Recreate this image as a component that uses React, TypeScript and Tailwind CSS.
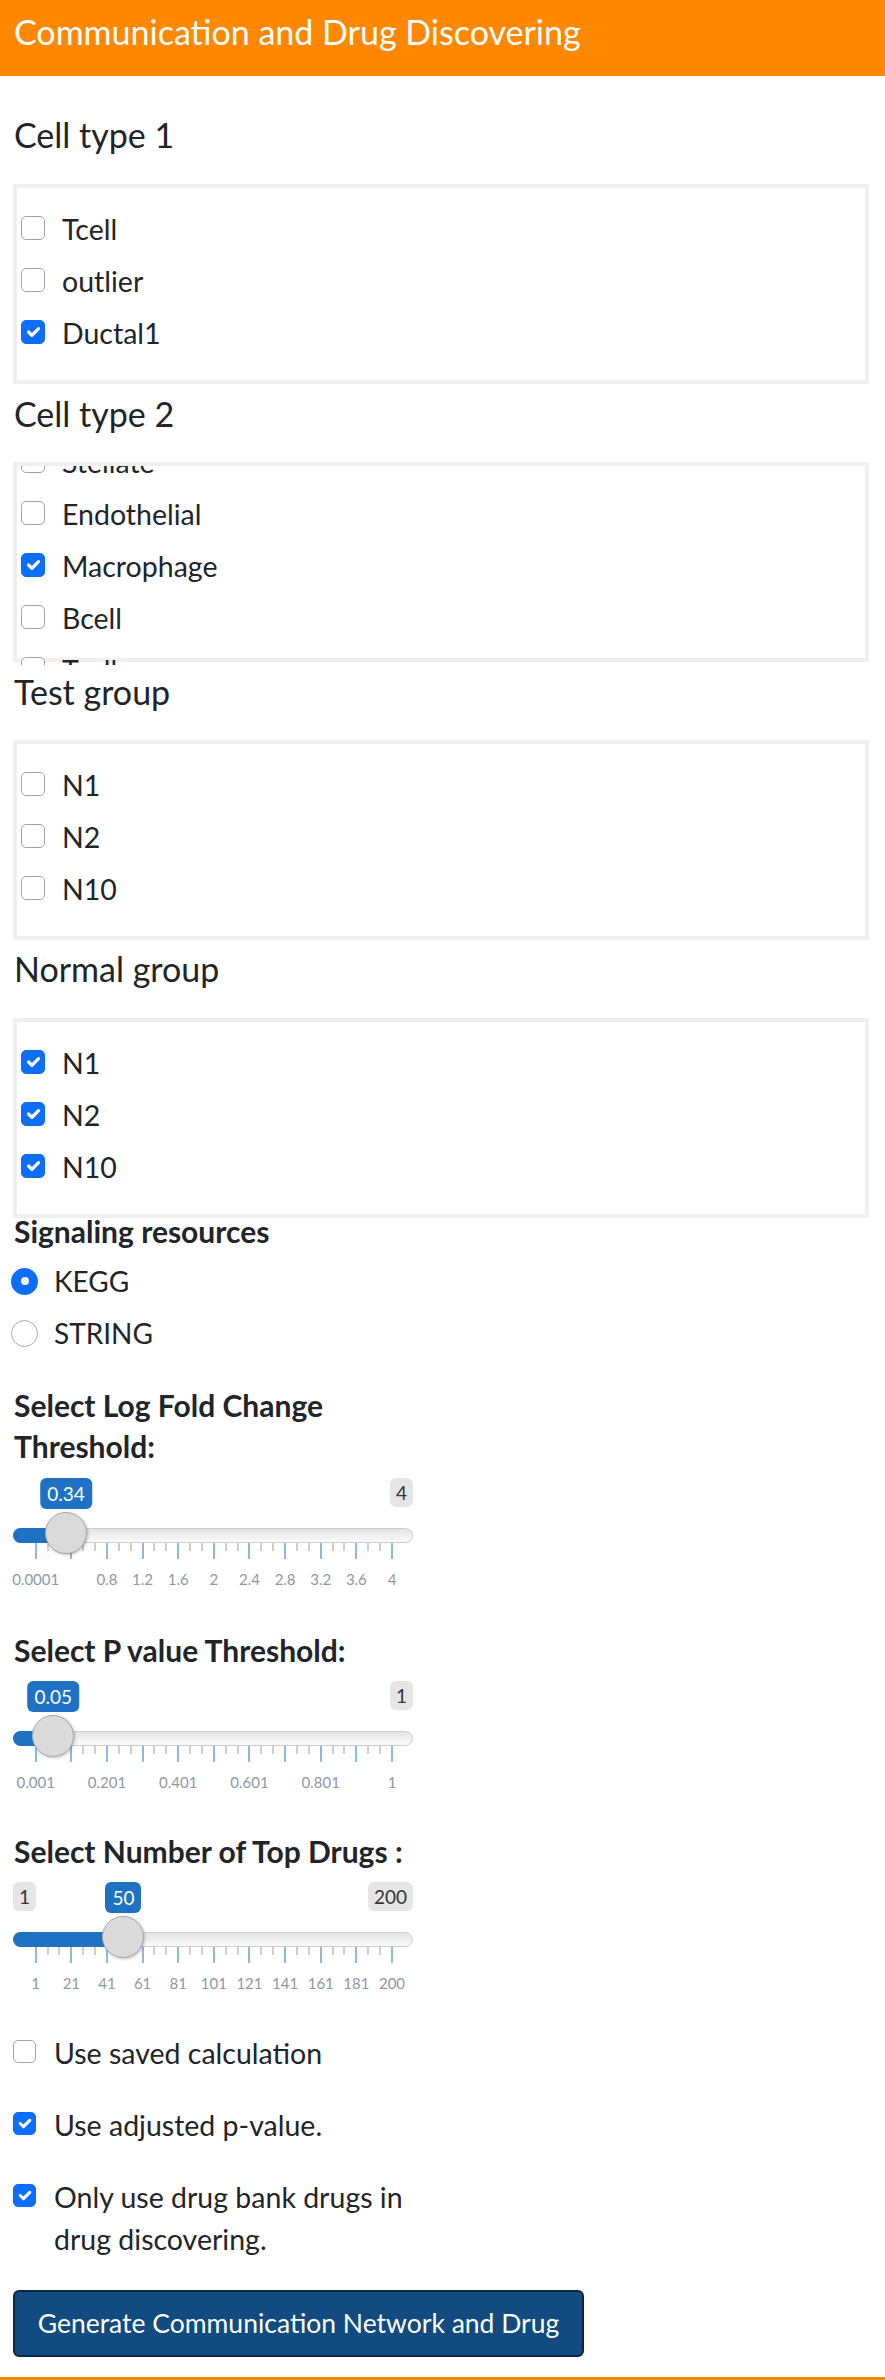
import React from "react";

function Box({ checked, small }: { checked: boolean; small?: boolean }) {
  const size = small ? "w-[23px] h-[23px] mt-[8px]" : "w-[24px] h-[24px] mt-[13px]";
  const look = checked
    ? "bg-[#0d6efd] border border-[#0d6efd]"
    : "bg-white border-[1.5px] border-[#a3a3a3]";
  return (
    <span className={`shrink-0 rounded-[5px] flex items-center justify-center ${size} ${look}`}>
      {checked && (
        <svg viewBox="0 0 20 20" className="w-full h-full">
          <path d="m6 10 3 3 6-6" fill="none" stroke="#fff" strokeWidth="3" strokeLinecap="round" strokeLinejoin="round" />
        </svg>
      )}
    </span>
  );
}

function Row({ label, checked }: { label: string; checked?: boolean }) {
  return (
    <div className="flex h-[52px] pl-[4px]">
      <Box checked={!!checked} />
      <span className="ml-[17px] text-[28.5px] leading-[52px] whitespace-nowrap">{label}</span>
    </div>
  );
}

function GroupBox({ shift, items }: { shift: string; items: { label: string; checked?: boolean }[] }) {
  return (
    <div className="h-[200px] w-[856px] border-4 border-[#efefef]">
      <div className="h-[199px] overflow-hidden">
        <div className={shift}>
          {items.map((it) => (
            <Row key={it.label} label={it.label} checked={it.checked} />
          ))}
        </div>
      </div>
    </div>
  );
}

const TICK0 = 22.7;
const STEP = 35.63;

function Slider({
  frac,
  value,
  maxText,
  minText,
  labels,
}: {
  frac: number;
  value: string;
  maxText: string;
  minText?: string;
  labels: (string | null)[];
}) {
  const hx = TICK0 + frac * STEP * 10;
  const majors = Array.from({ length: 11 }, (_, i) => TICK0 + i * STEP);
  const minors: number[] = [];
  majors.forEach((m, i) => {
    if (i > 0) {
      minors.push(m - STEP / 3, m - (2 * STEP) / 3);
    }
  });
  return (
    <div className="relative w-[400px] h-[120px]">
      {minText && (
        <span className="absolute left-0 top-0 h-[29px] px-[6px] rounded-[6px] bg-[#e5e5e5] text-[#333] text-[19px] leading-[29px]">
          {minText}
        </span>
      )}
      <span className="absolute right-0 top-0 h-[29px] px-[6px] rounded-[6px] bg-[#e5e5e5] text-[#333] text-[19px] leading-[29px]">
        {maxText}
      </span>
      <span
        className="absolute top-0 h-[31px] px-[7px] rounded-[6px] bg-[#1f72c3] text-white text-[19px] leading-[31px] -translate-x-1/2 whitespace-nowrap"
        style={{ left: hx }}
      >
        {value}
      </span>
      <div className="absolute left-0 right-0 top-[50px] h-[15px] rounded-full border border-[#cccccc] bg-linear-to-b from-[#e3e3e3] to-[#fbfbfb]" />
      <div className="absolute left-0 top-[50px] h-[15px] rounded-l-full bg-[#1f72c3]" style={{ width: hx }} />
      {minors.map((x, i) => (
        <span key={"s" + i} className="absolute top-[65px] w-[2px] h-[8px] bg-[#cdcdcd]" style={{ left: x - 1 }} />
      ))}
      {majors.map((x, i) => (
        <span key={"b" + i} className="absolute top-[65px] w-[2px] h-[16px] bg-[#8fb8e1]" style={{ left: x - 1 }} />
      ))}
      {majors.map((x, i) =>
        labels[i] ? (
          <span
            key={"l" + i}
            className="absolute top-[92px] text-[15px] leading-[18px] text-[#8e98a4] -translate-x-1/2 whitespace-nowrap"
            style={{ left: x }}
          >
            {labels[i]}
          </span>
        ) : null
      )}
      <span
        className="absolute top-[34px] w-[42px] h-[42px] rounded-full bg-[#dadada] border-[1.5px] border-[#a9a9a9] shadow-[1px_1px_3px_rgba(0,0,0,0.25)]"
        style={{ left: hx - 21 }}
      />
    </div>
  );
}

function Radio({ label, checked }: { label: string; checked?: boolean }) {
  return (
    <div className="flex items-center h-[52px] -ml-[2px]">
      {checked ? (
        <span className="w-[27px] h-[27px] rounded-full bg-[#0d6efd] flex items-center justify-center">
          <span className="w-[8px] h-[8px] rounded-full bg-white" />
        </span>
      ) : (
        <span className="w-[27px] h-[27px] rounded-full bg-white border-[1.5px] border-[#a9a9a9]" />
      )}
      <span className="ml-[16px] text-[28px] leading-[52px]">{label}</span>
    </div>
  );
}

function CheckRow({ checked, children, className }: { checked: boolean; children: React.ReactNode; className: string }) {
  return (
    <div className={`flex items-start ${className}`}>
      <Box small checked={checked} />
      <span className="ml-[18px] text-[28.5px] leading-[42px]">{children}</span>
    </div>
  );
}

export default function App() {
  return (
    <div className="w-[885px] bg-white font-['Lato',sans-serif] text-[#212529]">
      <div className="h-[76px] bg-[#ff8800] pt-[12px] pl-[14px] text-white text-[34px] leading-[40px]">
        Communication and Drug Discovering
      </div>
      <div className="px-[13px]">
        <div className="mt-[39px] pl-[1px] text-[34px] leading-[40px]">Cell type 1</div>
        <div className="mt-[29px]">
          <GroupBox
            shift="-mt-[37px]"
            items={[
              { label: "Bcell" },
              { label: "Tcell" },
              { label: "outlier" },
              { label: "Ductal1", checked: true },
            ]}
          />
        </div>
        <div className="mt-[10px] pl-[1px] text-[34px] leading-[40px]">Cell type 2</div>
        <div className="mt-[28px]">
          <GroupBox
            shift="-mt-[30px]"
            items={[
              { label: "Stellate" },
              { label: "Endothelial" },
              { label: "Macrophage", checked: true },
              { label: "Bcell" },
              { label: "Tcell" },
            ]}
          />
        </div>
        <div className="mt-[10px] pl-[1px] text-[34px] leading-[40px]">Test group</div>
        <div className="mt-[28px]">
          <GroupBox shift="pt-[15px]" items={[{ label: "N1" }, { label: "N2" }, { label: "N10" }]} />
        </div>
        <div className="mt-[9px] pl-[1px] text-[34px] leading-[40px]">Normal group</div>
        <div className="mt-[29px]">
          <GroupBox
            shift="pt-[15px]"
            items={[
              { label: "N1", checked: true },
              { label: "N2", checked: true },
              { label: "N10", checked: true },
            ]}
          />
        </div>
        <div className="mt-[1px] pl-[1px] text-[30px] leading-[24px] font-bold">Signaling resources</div>
        <div className="mt-[12px]">
          <Radio label="KEGG" checked />
          <Radio label="STRING" />
        </div>
        <div className="mt-[26px] pl-[1px] text-[30px] leading-[41px] font-bold">
          Select Log Fold Change
          <br />
          Threshold:
        </div>
        <div className="mt-[11px]">
          <Slider
            frac={(0.34 - 0.0001) / (4 - 0.0001)}
            value="0.34"
            maxText="4"
            labels={["0.0001", null, "0.8", "1.2", "1.6", "2", "2.4", "2.8", "3.2", "3.6", "4"]}
          />
        </div>
        <div className="mt-[32px] pl-[1px] text-[30px] leading-[41px] font-bold">Select P value Threshold:</div>
        <div className="mt-[10px]">
          <Slider
            frac={(0.05 - 0.001) / (1 - 0.001)}
            value="0.05"
            maxText="1"
            labels={["0.001", null, "0.201", null, "0.401", null, "0.601", null, "0.801", null, "1"]}
          />
        </div>
        <div className="mt-[30px] pl-[1px] text-[30px] leading-[41px] font-bold">Select Number of Top Drugs :</div>
        <div className="mt-[10px]">
          <Slider
            frac={(50 - 1) / 199}
            value="50"
            minText="1"
            maxText="200"
            labels={["1", "21", "41", "61", "81", "101", "121", "141", "161", "181", "200"]}
          />
        </div>
        <CheckRow checked={false} className="mt-[30px]">
          Use saved calculation
        </CheckRow>
        <CheckRow checked className="mt-[30px]">
          Use adjusted p-value.
        </CheckRow>
        <CheckRow checked className="mt-[30px]">
          Only use drug bank drugs in
          <br />
          drug discovering.
        </CheckRow>
        <div className="mt-[30px] w-[571px] h-[67px] rounded-[6px] border-2 border-[#0b2742] bg-[#124b80] text-white text-[26.5px] flex items-center justify-center">
          Generate Communication Network and Drug
        </div>
      </div>
      <div className="mt-[20px] h-[3px] bg-[#ff8800]" />
    </div>
  );
}
